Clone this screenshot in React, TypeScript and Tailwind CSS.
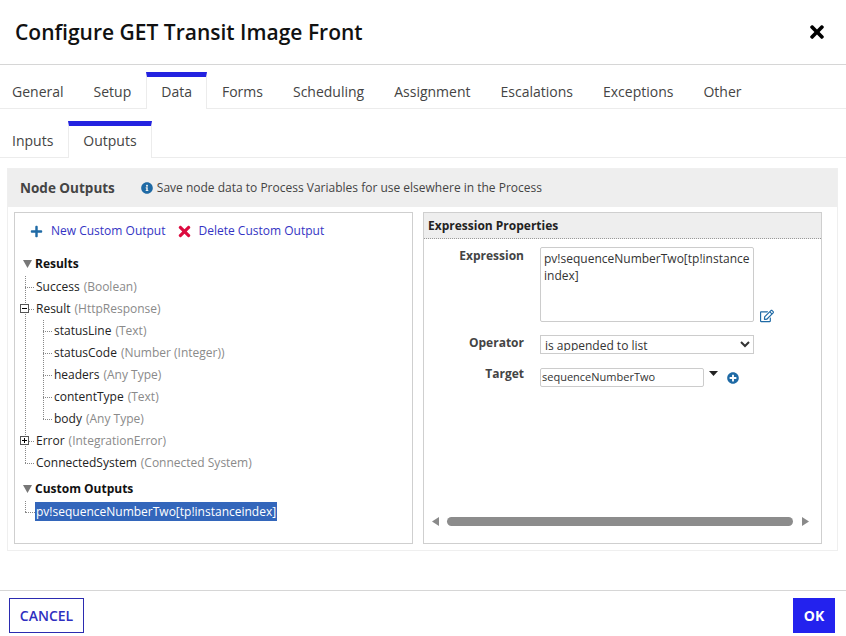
import React from "react";
import { FaPlus, FaTimes, FaInfoCircle, FaPlusCircle, FaRegEdit } from "react-icons/fa";

const topTabs = ["General", "Setup", "Data", "Forms", "Scheduling", "Assignment", "Escalations", "Exceptions", "Other"];

function Tabs({ items, active, className }: { items: string[]; active: string; className: string }) {
  return (
    <div className={"flex items-start border-b border-[#ececec] " + className}>
      {items.map((t, i) => (
        <div
          key={t}
          className={
            "flex items-center text-[14px] text-[#444] " +
            (t === active
              ? "-mb-px h-[37px] border-x border-t-[5px] border-x-[#ececec] border-t-[#2322e0] bg-white px-[14px] pb-[3px]"
              : "h-[36px] pt-[3px] " + (i === 0 ? "pl-3 pr-[15px]" : "px-[15px]"))
          }
        >
          {t}
        </div>
      ))}
    </div>
  );
}

function Row({ name, type, sign }: { name: string; type: string; sign?: "plus" | "minus" }) {
  return (
    <div className="relative flex h-[22px] items-center text-[12px] leading-none">
      <span className="relative mr-[2px] h-0 w-[9px] border-t border-dotted border-[#888]" />
      {sign && (
        <span className="absolute left-[-5px] top-[6px] flex h-[9px] w-[9px] items-center justify-center border border-[#555] bg-white">
          <span className="h-px w-[5px] bg-black" />
          {sign === "plus" && <span className="absolute h-[5px] w-px bg-black" />}
        </span>
      )}
      <span className="text-[#222]">{name}</span>
      <span className="ml-1 text-[#8a8a8a]">({type})</span>
    </div>
  );
}

function Group({ children, className }: { children: React.ReactNode; className?: string }) {
  return (
    <div className={"relative " + (className ?? "")}>
      <span className="absolute bottom-[11px] left-0 top-0 border-l border-dotted border-[#888]" />
      {children}
    </div>
  );
}

function Section({ title, className }: { title: string; className?: string }) {
  return (
    <div className={"flex h-[22px] items-center " + (className ?? "")}>
      <svg width="9" height="8" viewBox="0 0 9 8" className="mr-[3px]">
        <path d="M0 0h9L4.5 8z" fill="#777" />
      </svg>
      <span className="text-[12px] font-bold text-[#111]">{title}</span>
    </div>
  );
}

export default function App() {
  return (
    <div
      className="flex h-[636px] w-[846px] flex-col overflow-hidden bg-white"
      style={{ fontFamily: '"Open Sans", sans-serif' }}
    >
      <header className="flex h-[65px] shrink-0 items-center justify-between border-b border-[#d6d6d6] pl-[15px] pr-[19px]">
        <h1 className="pt-[2px] text-[21px] font-semibold text-[#111]">Configure GET Transit Image Front</h1>
        <FaTimes className="text-[20px] text-black" />
      </header>

      <Tabs items={topTabs} active="Data" className="mt-[7px] h-[37px] shrink-0" />
      <Tabs items={["Inputs", "Outputs"]} active="Outputs" className="mt-3 h-[37px] shrink-0" />

      <section className="mx-[7px] mt-[10px] h-[383px] w-[831px] shrink-0 border border-[#efefef]">
        <div className="flex h-[38px] items-center bg-[#eeeeee] pl-3">
          <span className="text-[13.5px] font-bold text-[#444]">Node Outputs</span>
          <FaInfoCircle className="ml-[26px] text-[12px] text-[#1f6aa5]" />
          <span className="ml-1 text-[12px] text-[#444]">Save node data to Process Variables for use elsewhere in the Process</span>
        </div>

        <div className="mt-[5px] flex gap-[10px] pl-[6px]">
          <div className="h-[332px] w-[399px] border border-[#cfcfcf] px-2">
            <div className="flex h-9 items-center pl-[7px] text-[12px] text-[#3434c4]">
              <FaPlus className="mr-[8px] text-[13px] text-[#1f6aa5]" />
              <span>New Custom Output</span>
              <FaTimes className="ml-[10px] mr-[6px] text-[17px] text-[#dc0b3f]" />
              <span>Delete Custom Output</span>
            </div>
            <div className="mt-[4px]">
              <Section title="Results" />
              <Group className="ml-[2px] mt-px">
                <Row name="Success" type="Boolean" />
                <Row name="Result" type="HttpResponse" sign="minus" />
                <Group className="ml-[18px]">
                  <Row name="statusLine" type="Text" />
                  <Row name="statusCode" type="Number (Integer)" />
                  <Row name="headers" type="Any Type" />
                  <Row name="contentType" type="Text" />
                  <Row name="body" type="Any Type" />
                </Group>
                <Row name="Error" type="IntegrationError" sign="plus" />
                <Row name="ConnectedSystem" type="Connected System" />
              </Group>
              <Section title="Custom Outputs" className="mt-[4px]" />
              <div className="relative ml-[2px] mt-px flex h-[22px] items-center">
                <span className="absolute left-0 top-0 h-[11px] border-l border-dotted border-[#888]" />
                <span className="h-0 w-[10px] border-t border-dotted border-[#888]" />
                <span className="mb-[2px] flex h-[19px] items-center bg-[#3366bb] px-px pt-[2px] text-[12px] text-white">
                  pv!sequenceNumberTwo[tp!instanceindex]
                </span>
              </div>
            </div>
          </div>

          <div className="flex h-[332px] w-[399px] flex-col border border-[#cfcfcf]">
            <div className="flex h-[26px] shrink-0 items-center border-b border-dotted border-[#999] bg-[#eeeeee] pl-1 text-[12px] font-bold text-[#222]">
              Expression Properties
            </div>
            <div className="grid grid-cols-[100px_214px_auto] items-start gap-x-4 pt-2">
              <label className="text-right text-[12px] font-bold text-[#444]">Expression</label>
              <textarea
                readOnly
                value={"pv!sequenceNumberTwo[tp!instance\nindex]"}
                className="block h-[75px] w-[214px] resize-none rounded-[2px] border border-[#ccc] px-[3px] py-[3px] text-[12px] leading-[16.5px] text-[#333] outline-none"
              />
              <FaRegEdit className="-ml-[10px] mt-[62px] text-[14px] text-[#1f6aa5]" />

              <label className="mt-[11px] text-right text-[12px] font-bold text-[#444]">Operator</label>
              <select
                defaultValue="append"
                className="mt-[12px] h-[19px] w-[214px] border border-[#ccc] bg-white pb-[2px] text-[12px] text-[#333] outline-none"
              >
                <option value="append">is appended to list</option>
              </select>
              <span />

              <label className="mt-[11px] text-right text-[12px] font-bold text-[#444]">Target</label>
              <div className="col-span-2 mt-[14px] flex items-start">
                <input
                  readOnly
                  value="sequenceNumberTwo"
                  className="h-[19px] w-[164px] rounded-[2px] border border-[#ccc] px-px pb-[2px] text-[11px] text-[#333] outline-none"
                />
                <svg width="9" height="5" viewBox="0 0 9 5" className="ml-[5px] mt-[3px]">
                  <path d="M0 0h9L4.5 5z" fill="#222" />
                </svg>
                <FaPlusCircle className="ml-[9px] mt-[4px] text-[12px] text-[#1f6aa5]" />
              </div>
            </div>
            <div className="mb-[17px] mt-auto flex items-center pl-2 pr-3">
              <svg width="7" height="9" viewBox="0 0 7 9">
                <path d="M7 0v9L0 4.5z" fill="#8a8a8a" />
              </svg>
              <div className="ml-[8px] h-[9px] flex-1 rounded-full bg-[#8c8c8c]" />
              <svg width="7" height="9" viewBox="0 0 7 9" className="ml-[9px]">
                <path d="M0 0v9l7-4.5z" fill="#8a8a8a" />
              </svg>
            </div>
          </div>
        </div>
      </section>

      <footer className="mt-auto flex h-[46px] shrink-0 items-start justify-between border-t border-[#d6d6d6] pl-[9px] pr-[11px] pt-[7px]">
        <button className="h-[35px] w-[75px] border border-[#2b2bb0] text-[14px] font-semibold text-[#2f2fc0]">CANCEL</button>
        <button className="h-[35px] w-[42px] bg-[#2322ee] text-[14px] font-bold text-white">OK</button>
      </footer>
    </div>
  );
}
